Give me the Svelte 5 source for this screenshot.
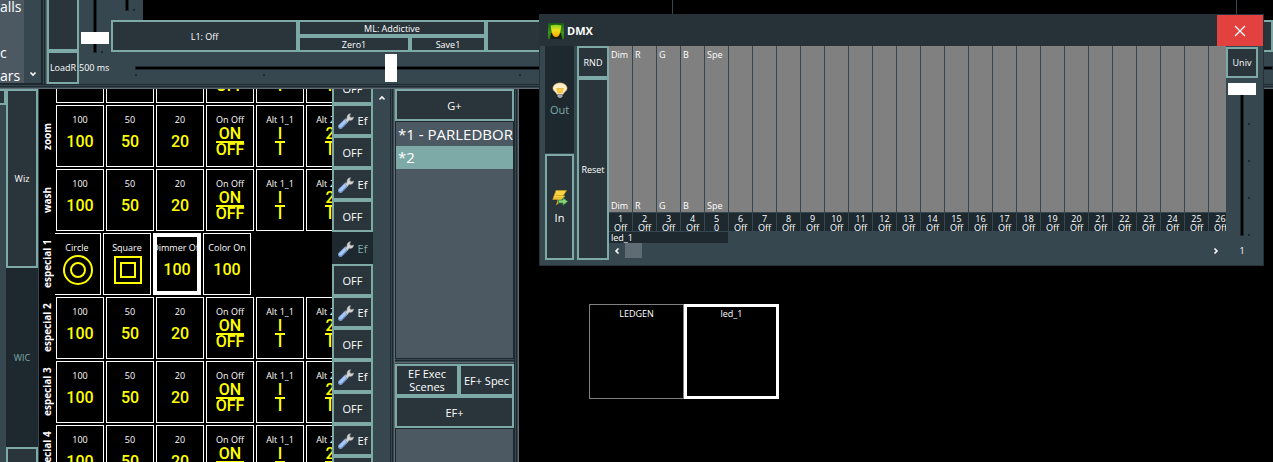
<script>
  const presets = [
    { label: '100', top: '100' },
    { label: '50', top: '50' },
    { label: '20', top: '20' },
    { label: 'On Off', top: 'ON', bottom: 'OFF' },
    { label: 'Alt 1_1', top: 'I', bottom: 'I' },
    { label: 'Alt 2_1', top: '2', bottom: 'I' }
  ];
  const special = [
    { label: 'Circle', shape: 'circle' },
    { label: 'Square', shape: 'square' },
    { label: 'Dimmer Off', top: '100', selected: true },
    { label: 'Color On', top: '100' }
  ];
  const rows = [
    { name: '', cells: presets },
    { name: 'zoom', cells: presets },
    { name: 'wash', cells: presets },
    { name: 'especial 1', cells: special, active: true },
    { name: 'especial 2', cells: presets },
    { name: 'especial 3', cells: presets },
    { name: 'especial 4', cells: presets }
  ];
  const names = ['Dim', 'R', 'G', 'B', 'Spe'];
  const channels = Array.from({ length: 26 }, (_, i) => ({
    number: i + 1,
    name: names[i] ?? '',
    value: i === 4 ? '0' : 'Off'
  }));
</script>

{#snippet chevron(dir)}
  <svg class="chevron {dir}" viewBox="0 0 8 8" width="8" height="8" aria-hidden="true">
    <path d="M1.500 5.500 4 3l2.500 2.500" fill="none" stroke="#fff" stroke-width="1.600" />
  </svg>
{/snippet}

<div class="app">
  <header>
    <div class="names">
      <ul><li>alls</li><li></li><li>c</li><li>ars</li></ul>
      <div class="scroll end">{@render chevron('down')}</div>
    </div>
    <div class="split v"></div>
    <div class="loads">
      <button class="btn load-top" aria-label="Load"></button>
      <button class="btn">LoadR</button>
    </div>
    <div class="master">
      <div class="fader one">
        <input class="vert" type="range" aria-label="Fader 1" value="8" />
      </div>
      <div class="upper">
        <div class="fader two">
          <input class="vert" type="range" aria-label="Fader 2" value="100" />
        </div>
        <div class="pane first"></div>
        <div class="pane"></div>
      </div>
      <div class="layers">
        <button class="btn layer">L1: Off</button>
        <div class="mode">
          <button class="btn wide">ML: Addictive</button>
          <button class="btn">Zero1</button>
          <button class="btn">Save1</button>
        </div>
        <button class="btn rest" aria-label="Layer 2"></button>
      </div>
      <div class="time">
        <label for="fade">500 ms</label>
        <div class="track">
          <input id="fade" class="horiz" type="range" max="1000" value="222" />
        </div>
      </div>
    </div>
  </header>
  <div class="split h"></div>

  <main>
    <aside>
      <div class="edge"><button class="btn" aria-label="Previous"></button></div>
      <div class="tabs">
        <button class="btn">Wiz</button>
        <button class="btn active">WIC</button>
        <button class="btn" aria-label="Next"></button>
      </div>
    </aside>

    <section class="stage">
      <div class="rows">
        {#each rows as row}
          <div class="row">
            <div class="name">{row.name}</div>
            <div class="cells" class:shifted={row.active}>
              {#each row.cells as cell}
                <button class="cell" class:selected={cell.selected}>
                  <span class="caption">{cell.label}</span>
                  {#if cell.shape}
                    <svg class="shape" viewBox="0 0 32 32" width="32" height="32" fill="none" stroke="#ff0" stroke-width="2" aria-hidden="true">
                      {#if cell.shape === 'circle'}
                        <circle cx="17" cy="16" r="14" /><circle cx="17" cy="16" r="7" />
                      {:else}
                        <rect x="4" y="3" width="26" height="26" /><rect x="10" y="9" width="14" height="14" />
                      {/if}
                    </svg>
                  {:else if cell.bottom}
                    <span class="fraction">
                      <span class="over" class:short={cell.top !== 'ON'}>{cell.top}</span>
                      <span>{cell.bottom}</span>
                    </span>
                  {:else}
                    <span class="level" class:tall={row.active}>{cell.top}</span>
                  {/if}
                </button>
              {/each}
            </div>
            <div class="actions">
              <button class="btn ef" class:active={row.active}>
                <svg viewBox="0 0 16 16" width="16" height="16" aria-hidden="true">
                  <path d="M2.500 13.500 8 8" stroke="#6f93cf" stroke-width="5" stroke-linecap="round" />
                  <path d="M2.500 13 7.500 8" stroke="#a9c8f3" stroke-width="3" stroke-linecap="round" />
                  <path d="M7.200 7.200 9 5.500C8.600 3 10 .8 12.600.600L11.700 3.200l1.200 1.400 2.700-.6C15.600 6.600 13.600 8 11 7.500L9.200 9.200z" fill="#d4d4d4" stroke="#8d8d8d" stroke-width=".6" />
                </svg>
                Ef
              </button>
              <button class="btn">OFF</button>
            </div>
          </div>
        {/each}
      </div>
      <div class="scroll">{@render chevron('up')}</div>
    </section>
    <div class="split v"></div>

    <section class="groups">
      <button class="btn">G+</button>
      <ul class="list">
        <li>*1 - PARLEDBOR</li>
        <li class="current">*2</li>
      </ul>
      <div class="split h"></div>
      <div class="pair">
        <button class="btn">EF Exec Scenes</button>
        <button class="btn">EF+ Spec</button>
      </div>
      <button class="btn">EF+</button>
      <ul class="list tail"></ul>
    </section>
    <div class="split v"></div>

    <section class="canvas">
      <button class="fixture">LEDGEN</button>
      <button class="fixture picked">led_1</button>
    </section>
  </main>

  <section class="window" aria-label="DMX">
    <div class="title">
      <svg viewBox="0 0 16 16" width="16" height="16" aria-hidden="true">
        <defs>
          <linearGradient id="leaf" x2="0" y2="1"><stop stop-color="#195b17" /><stop offset=".6" stop-color="#3f9419" /><stop offset="1" stop-color="#257a16" /></linearGradient>
          <linearGradient id="beam" x2="0" y2="1"><stop stop-color="#7ed321" /><stop offset=".45" stop-color="#f0e01c" /><stop offset="1" stop-color="#f6a400" /></linearGradient>
        </defs>
        <rect width="16" height="16" rx="1" fill="url(#leaf)" />
        <path d="M3 10h10l1 6H2z" fill="#161c10" />
        <path d="M2.500 2.500q5.500-1.500 11 0L12 10q-1 4-4 4t-4-4z" fill="url(#beam)" />
      </svg>
      <h1>DMX</h1>
      <button class="close" aria-label="Close">
        <svg viewBox="0 0 12 12" width="12" height="12" aria-hidden="true"><path d="m1 1 10 10M11 1 1 11" stroke="#fff" stroke-width="1.300" /></svg>
      </button>
    </div>
    <div class="content">
      <div class="ports">
        <button class="btn active">
          <svg viewBox="0 0 16 16" width="16" height="16" aria-hidden="true">
            <path d="M8 1C4 1 1 3.300 1 6.300c0 3 3.500 3.700 4 6.200h6c.5-2.500 4-3.200 4-6.200C15 3.300 12 1 8 1z" fill="#ffeec8" stroke="#e2b982" stroke-width=".7" />
            <path d="M4.500 6.500h7L9.800 11H6.200z" fill="#f8ce3f" stroke="#e3a83c" stroke-width=".6" />
            <path d="M5.500 12.500h5v2L9 16H7l-1.500-1.500z" fill="#aaa" stroke="#666" stroke-width=".5" />
          </svg>
          Out
        </button>
        <button class="btn">
          <svg viewBox="0 0 16 16" width="16" height="16" aria-hidden="true">
            <path d="M4 .500h10.500L11 6h2l-8.500 9L6 9.500H.800z" fill="#f8d743" stroke="#c79824" stroke-width=".7" />
            <path d="M4 5.500h7M2.500 8H10" stroke="#cf9b22" stroke-width=".8" />
            <path d="M6.500 10H11V7.800l4.700 3.800L11 15.300V13H6.500z" fill="#8bd47b" stroke="#36833c" stroke-width=".8" />
          </svg>
          In
        </button>
      </div>
      <div class="tools">
        <button class="btn">RND</button>
        <button class="btn">Reset</button>
      </div>
      <div class="desk">
        <div class="channels">
          {#each channels as ch}
            <div class="channel">
              <div class="bar"><span>{ch.name}</span><span>{ch.name}</span></div>
              <div class="value"><span>{ch.number}</span><span>{ch.value}</span></div>
            </div>
          {/each}
        </div>
        <div class="patch">led_1</div>
        <div class="hscroll">
          {@render chevron('left')}
          <div class="grip"></div>
          {@render chevron('right')}
        </div>
      </div>
      <div class="universe">
        <button class="btn">Univ</button>
        <input id="univ" class="vert" type="range" value="100" />
        <label for="univ">1</label>
      </div>
    </div>
  </section>
</div>

<style>
  :global(body) { margin: 0; background: #000; }
  .app {
    --slate: #37474f;
    --dark: #1d292f;
    --panel: #4c5963;
    --teal: #7daaa7;
    --face: #2a343b;
    position: relative;
    display: flex;
    flex-direction: column;
    height: 100vh;
    overflow: hidden;
    background: #000;
    color: #fff;
    font: 9px/12px "Open Sans", "Noto Sans", sans-serif;
  }
  .app * { box-sizing: border-box; }
  button, input { margin: 0; padding: 0; font: inherit; color: inherit; }
  ul { margin: 0; padding: 0; list-style: none; }
  .btn {
    min-width: 0;
    padding-top: 1px;
    border: 2px solid var(--teal);
    background: var(--face);
    text-align: center;
  }
  .btn.active { border-color: var(--dark); background: var(--dark); color: var(--teal); }
  .split { flex: none; }
  .split.h { height: 5px; background: linear-gradient(#1d292f 1px, #37474f 1px 2px, #1d292f 2px 3px, #37474f 3px 4px, #5f6c73 4px); }
  .split.v { width: 5px; background: linear-gradient(90deg, #1d292f 1px, #37474f 1px 2px, #1d292f 2px 3px, #37474f 3px 4px, #5f6c73 4px); }
  .scroll { display: flex; flex: none; justify-content: center; width: 17px; padding: 5px 0; background: var(--slate); }
  .scroll.end { align-items: flex-end; }
  .chevron { flex: none; }
  .down { transform: rotate(180deg); }
  .left { transform: rotate(-90deg); }
  .right { transform: rotate(90deg); }

  input[type='range'] { appearance: none; background: none; }
  input::-webkit-slider-runnable-track { background: #000; box-shadow: inset 0 0 0 1px var(--dark); }
  input::-webkit-slider-thumb { appearance: none; border: 0; background: #fff; }
  .horiz { display: block; width: 100%; height: 32px; }
  .horiz::-webkit-slider-runnable-track { height: 4px; }
  .horiz::-webkit-slider-thumb { width: 12px; height: 28px; margin-top: -12px; }
  .vert { writing-mode: vertical-lr; direction: rtl; width: 28px; }
  .vert::-webkit-slider-runnable-track { width: 4px; }
  .vert::-webkit-slider-thumb { width: 28px; height: 12px; margin-left: -12px; }

  header { display: flex; flex: none; height: 84px; background: var(--slate); }
  .names { display: flex; width: 42px; border-right: 1px solid var(--dark); border-bottom: 1px solid var(--dark); }
  .names ul { width: 24px; overflow: hidden; background: var(--panel); font-size: 14px; line-height: 23px; }
  .names li { height: 23px; margin-top: -5px; margin-bottom: 5px; }
  .loads { display: grid; grid-template-rows: 51px 33px; width: 32px; }
  .load-top { border-top: 0; }
  .master { display: grid; flex: 1; grid-template: 20px 32px 32px / 32px 1fr; min-width: 0; overflow: hidden; }
  .fader {
    display: flex;
    align-items: flex-end;
    justify-content: center;
    width: 32px;
    overflow: hidden;
    background: linear-gradient(#1d292f, #1d292f) 22px 100% / 2px 2px no-repeat #37474f;
  }
  .fader .vert { flex: none; height: 120px; }
  .one { grid-row: 1 / 3; height: 53px; }
  .two { flex: none; height: 11px; box-shadow: 0 9px #37474f; }
  .upper { display: flex; background: #000; }
  .pane { width: 564px; flex: none; border-right: 1px solid var(--slate); }
  .pane.first { width: 530px; }
  .layers { display: flex; min-width: 0; }
  .layer { flex: none; width: 187px; }
  .mode { display: grid; flex: none; grid-template: 16px 16px / 112px 76px; line-height: 11px; }
  .wide { grid-column: span 2; }
  .rest { flex: 1; }
  .time { display: flex; grid-column: span 2; align-items: center; }
  .time label { flex: none; width: 56px; }
  .track { flex: 1; background: repeating-linear-gradient(90deg, #1d292f 0 2px, transparent 2px 128px) 0 22px / 100% 2px no-repeat; }

  main { display: flex; flex: 1; min-height: 0; }
  aside { display: flex; flex: none; width: 39px; border-right: 1px solid var(--slate); background: var(--slate); }
  .edge { width: 6px; }
  .edge .btn { display: block; width: 100%; height: 16px; border-left: 0; }
  .tabs { display: grid; grid-template-rows: 179px 179px 179px; width: 32px; }
  .stage { display: flex; flex: none; width: 351px; overflow: hidden; }
  .rows { width: 334px; margin-top: -49px; }
  .row { display: flex; height: 64px; }
  .name {
    flex: none;
    width: 16px;
    writing-mode: vertical-rl;
    transform: rotate(180deg);
    font-size: 10px;
    font-weight: 700;
    line-height: 16px;
    text-align: center;
  }
  .cells { display: flex; flex: 1; gap: 2px; padding: 1px; overflow: hidden; }
  .shifted { padding-left: 0; }
  .shifted .cell:first-child { margin-left: -2px; }
  .cell {
    display: flex;
    flex: none;
    flex-direction: column;
    align-items: center;
    width: 48px;
    height: 62px;
    padding-top: 8px;
    overflow: hidden;
    border: 1px solid #fff;
    background: #000;
  }
  .selected { padding-top: 5px; border-width: 4px; }
  .caption { line-height: 12px; white-space: nowrap; }
  .level, .fraction { color: #ff0; font: 500 16px/12px Roboto, "Liberation Sans", sans-serif; }
  .level { margin-top: 10px; }
  .tall { margin-top: 8px; line-height: 16px; }
  .fraction { display: flex; flex-direction: column; align-items: center; margin-top: 2px; }
  .over { min-width: 28px; padding-bottom: 1px; margin-bottom: 1px; border-bottom: 2px solid #ff0; }
  .over.short { min-width: 10px; }
  .shape { flex: none; }
  .actions { display: grid; flex: none; grid-template-rows: 32px 32px; width: 41px; font-size: 11px; }
  .ef { display: flex; align-items: center; justify-content: center; gap: 4px; }

  .groups { display: flex; flex: none; flex-direction: column; width: 119px; background: var(--slate); font-size: 11px; }
  .groups .btn { flex: none; height: 32px; padding-top: 0; line-height: 13px; }
  .list { flex: none; height: 237px; padding: 1px 0 0; border: solid var(--dark); border-width: 1px 1px 0; background: var(--panel); font-size: 15px; line-height: 23px; overflow: hidden; }
  .list li { padding-left: 2px; white-space: nowrap; }
  .current { background: var(--teal); }
  .tail { flex: 1; height: auto; }
  .pair { display: grid; grid-template-columns: 64px 55px; margin-top: 1px; }
  .canvas { display: flex; flex: 1; align-items: flex-start; padding: 215px 0 0 70px; }
  .fixture {
    display: flex;
    justify-content: center;
    width: 95px;
    height: 95px;
    padding-top: 3px;
    border: 1px solid #808080;
    background: #000;
  }
  .picked { padding-top: 1px; border: 3px solid #fff; }

  .window {
    position: absolute;
    top: 14px;
    right: 9px;
    left: 539px;
    display: flex;
    flex-direction: column;
    height: 252px;
    border: 1px solid #263238;
    background: var(--slate);
  }
  .title { display: flex; flex: none; align-items: center; height: 31px; padding-left: 8px; gap: 3px; background: #263238; }
  h1 { flex: 1; margin: 0; font-size: 11px; line-height: 16px; }
  .close { display: grid; place-items: center; width: 46px; height: 31px; border: 0; background: #e34040; }
  .content { display: flex; flex: 1; min-height: 0; padding: 0 5px; }
  .ports { display: grid; flex: none; grid-template-rows: 107px 106px; gap: 1px; width: 29px; margin-right: 3px; font-size: 11px; line-height: 16px; }
  .ports .btn { display: flex; flex-direction: column; align-items: center; justify-content: center; gap: 4px; }
  .tools { display: grid; flex: none; grid-template-rows: 32px 182px; width: 32px; }
  .desk { flex: 1; min-width: 0; }
  .channels { display: flex; overflow: hidden; gap: 1px; }
  .channel { flex: none; width: 23px; }
  .bar { display: flex; flex-direction: column; justify-content: space-between; height: 166px; padding: 3px 2px 0; background: #808080; }
  .value { display: flex; flex-direction: column; height: 18px; margin-top: 1px; overflow: hidden; background: var(--dark); line-height: 9px; padding-top: 1px; text-align: center; }
  .patch { width: 119px; height: 11px; margin-top: 1px; padding-left: 2px; background: var(--dark); line-height: 12px; }
  .hscroll { display: flex; align-items: center; gap: 4px; height: 15px; padding: 0 6px 0 4px; }
  .grip { width: 17px; height: 15px; margin-right: auto; background: #606c73; }
  .universe { display: flex; flex: none; flex-direction: column; align-items: center; width: 32px; background: repeating-linear-gradient(#1d292f 0 2px, transparent 2px 37px) 22px 77px / 2px 114px no-repeat; }
  .universe .btn { width: 32px; height: 31px; margin-top: 1px; }
  .universe .vert { height: 153px; margin: 5px 0 9px; }
</style>
